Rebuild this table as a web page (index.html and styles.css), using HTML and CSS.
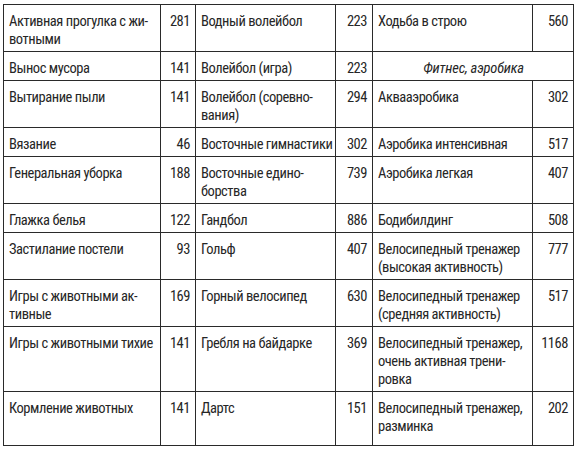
FILE: index.html
```html
<!DOCTYPE html>
<html lang="ru">
<head>
<meta charset="utf-8">
<link rel="stylesheet" href="styles.css">
</head>
<body>
<table class="tbl">
<colgroup>
<col class="c-name1"><col class="c-num1"><col class="c-name2"><col class="c-num2"><col class="c-name3"><col class="c-num3">
</colgroup>
<tbody>
<tr><td>Активная прогулка с жи-<br>вотными</td><td class="n">281</td><td>Водный волейбол</td><td class="n">223</td><td>Ходьба в строю</td><td class="n">560</td></tr>
<tr><td>Вынос мусора</td><td class="n">141</td><td>Волейбол (игра)</td><td class="n">223</td><td class="sec" colspan="2">Фитнес, аэробика</td></tr>
<tr><td>Вытирание пыли</td><td class="n">141</td><td>Волейбол (соревно-<br>вания)</td><td class="n">294</td><td>Аквааэробика</td><td class="n">302</td></tr>
<tr><td>Вязание</td><td class="n">46</td><td>Восточные гимнастики</td><td class="n">302</td><td>Аэробика интенсивная</td><td class="n">517</td></tr>
<tr><td>Генеральная уборка</td><td class="n">188</td><td>Восточные едино-<br>борства</td><td class="n">739</td><td>Аэробика легкая</td><td class="n">407</td></tr>
<tr><td>Глажка белья</td><td class="n">122</td><td>Гандбол</td><td class="n">886</td><td>Бодибилдинг</td><td class="n">508</td></tr>
<tr><td>Застилание постели</td><td class="n">93</td><td>Гольф</td><td class="n">407</td><td>Велосипедный тренажер<br>(высокая активность)</td><td class="n">777</td></tr>
<tr><td>Игры с животными ак-<br>тивные</td><td class="n">169</td><td>Горный велосипед</td><td class="n">630</td><td>Велосипедный тренажер<br>(средняя активность)</td><td class="n">517</td></tr>
<tr><td>Игры с животными тихие</td><td class="n">141</td><td>Гребля на байдарке</td><td class="n">369</td><td>Велосипедный тренажер,<br>очень активная трени-<br>ровка</td><td class="n">1168</td></tr>
<tr class="last"><td>Кормление животных</td><td class="n">141</td><td>Дартс</td><td class="n">151</td><td>Велосипедный тренажер,<br>разминка</td><td class="n">202</td></tr>
</tbody>
</table>
</body>
</html>
```
FILE: styles.css
```css
html, body {
  margin: 0;
  padding: 0;
  background: #ffffff;
}
.tbl {
  margin: 4px 0 0 3px;
  width: 570px;
  table-layout: fixed;
  border-collapse: collapse;
  font-family: "Roboto Condensed", "DejaVu Sans Condensed", sans-serif;
  font-size: 14.5px;
  letter-spacing: -0.45px;
  line-height: 18px;
  color: #262626;
}
.c-name1 { width: 157px; }
.c-num1 { width: 35px; }
.c-name2 { width: 140px; }
.c-num2 { width: 37px; }
.c-name3 { width: 160px; }
.c-num3 { width: 41px; }
.tbl td {
  border: 1px solid #2a2a2a;
  padding: 8px 4px 2px 5px;
  vertical-align: top;
  text-align: left;
  white-space: nowrap;
  overflow: hidden;
}
.tbl td.n {
  text-align: right;
  padding-right: 5px;
}
.tbl td.sec {
  text-align: center;
  font-style: italic;
  letter-spacing: -0.2px;
}
.tbl tr.last td {
  padding-bottom: 9px;
}
```
